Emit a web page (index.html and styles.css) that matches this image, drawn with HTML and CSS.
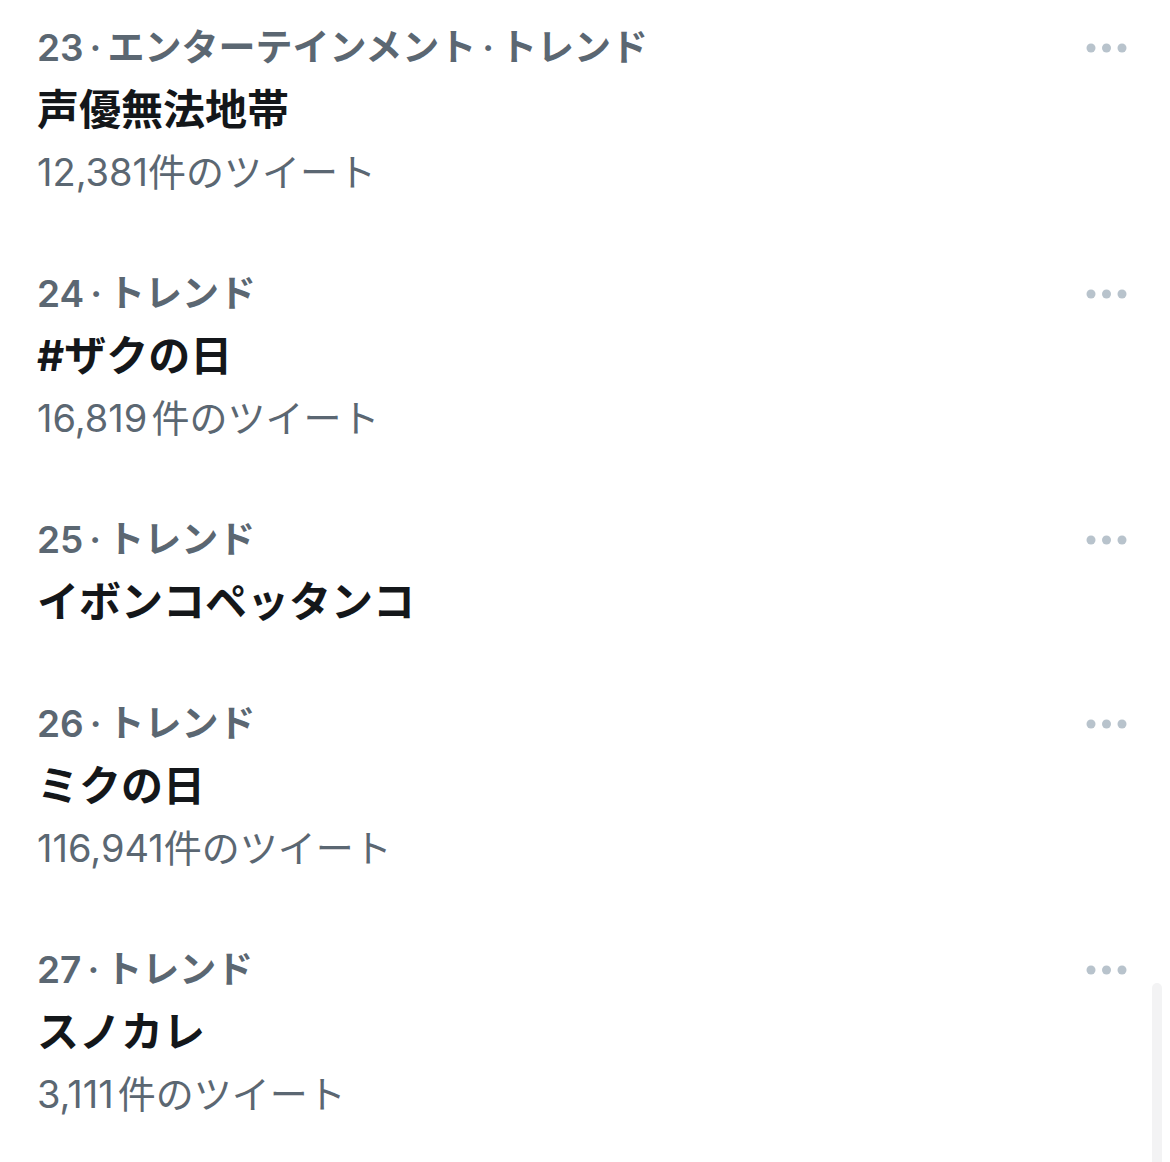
FILE: index.html
```html
<!DOCTYPE html>
<html lang="ja">
<head>
    <meta charset="UTF-8">
    <meta name="viewport" content="width=device-width, initial-scale=1.0">
    <title>トレンド</title>
    <link rel="stylesheet" href="styles.css">
</head>
<body>
    <main class="trends">
        <article class="trend">
            <div class="trend-body">
                <div class="trend-meta">23<span class="sep">·</span>エンターテインメント<span class="sep">·</span>トレンド</div>
                <div class="trend-name">声優無法地帯</div>
                <div class="trend-count">12,381件のツイート</div>
            </div>
            <button class="trend-more" aria-label="その他">
                <svg width="42" height="10" viewBox="0 0 42 10"><circle cx="5" cy="5" r="4.5"/><circle cx="20.5" cy="5" r="4.5"/><circle cx="36" cy="5" r="4.5"/></svg>
            </button>
        </article>

        <article class="trend">
            <div class="trend-body">
                <div class="trend-meta">24<span class="sep">·</span>トレンド</div>
                <div class="trend-name">#ザクの日</div>
                <div class="trend-count">16,819<span class="gap"></span>件のツイート</div>
            </div>
            <button class="trend-more" aria-label="その他">
                <svg width="42" height="10" viewBox="0 0 42 10"><circle cx="5" cy="5" r="4.5"/><circle cx="20.5" cy="5" r="4.5"/><circle cx="36" cy="5" r="4.5"/></svg>
            </button>
        </article>

        <article class="trend">
            <div class="trend-body">
                <div class="trend-meta">25<span class="sep">·</span>トレンド</div>
                <div class="trend-name">イボンコペッタンコ</div>
            </div>
            <button class="trend-more" aria-label="その他">
                <svg width="42" height="10" viewBox="0 0 42 10"><circle cx="5" cy="5" r="4.5"/><circle cx="20.5" cy="5" r="4.5"/><circle cx="36" cy="5" r="4.5"/></svg>
            </button>
        </article>

        <article class="trend">
            <div class="trend-body">
                <div class="trend-meta">26<span class="sep">·</span>トレンド</div>
                <div class="trend-name">ミクの日</div>
                <div class="trend-count">116,941件のツイート</div>
            </div>
            <button class="trend-more" aria-label="その他">
                <svg width="42" height="10" viewBox="0 0 42 10"><circle cx="5" cy="5" r="4.5"/><circle cx="20.5" cy="5" r="4.5"/><circle cx="36" cy="5" r="4.5"/></svg>
            </button>
        </article>

        <article class="trend">
            <div class="trend-body">
                <div class="trend-meta">27<span class="sep">·</span>トレンド</div>
                <div class="trend-name">スノカレ</div>
                <div class="trend-count">3,111<span class="gap"></span>件のツイート</div>
            </div>
            <button class="trend-more" aria-label="その他">
                <svg width="42" height="10" viewBox="0 0 42 10"><circle cx="5" cy="5" r="4.5"/><circle cx="20.5" cy="5" r="4.5"/><circle cx="36" cy="5" r="4.5"/></svg>
            </button>
        </article>
    </main>

    <div class="scrollbar"></div>
</body>
</html>
```

FILE: styles.css
```css
body {
    margin: 0;
    padding: 0;
    background-color: #fff;
    font-family: Inter, "Noto Sans CJK JP", sans-serif;
    overflow: hidden;
}

.trends {
    margin-top: -13px;
}

.trend {
    display: flex;
    align-items: flex-start;
    justify-content: space-between;
    padding: 30px 42px 30px 37px;
}

.trend-meta,
.trend-name,
.trend-count {
    height: 62px;
    line-height: 62px;
    white-space: nowrap;
}

.trend-meta {
    font-size: 37px;
    font-weight: 600;
    color: #5b6772;
}

.sep {
    margin: 0 6px;
}

.trend-name {
    font-size: 42px;
    font-weight: 700;
    color: #14171a;
}

.trend-count {
    font-size: 38px;
    font-weight: 400;
    color: #5b6772;
}

.gap {
    display: inline-block;
    width: 4px;
}

.trend-more {
    display: flex;
    align-items: center;
    height: 62px;
    padding: 0;
    border: none;
    background: none;
}

.trend-more svg {
    fill: #b8c3cc;
}

.scrollbar {
    position: fixed;
    right: 8px;
    top: 983px;
    width: 10px;
    height: 200px;
    border-radius: 5px 5px 0 0;
    background-color: #f3f3f4;
}
```
